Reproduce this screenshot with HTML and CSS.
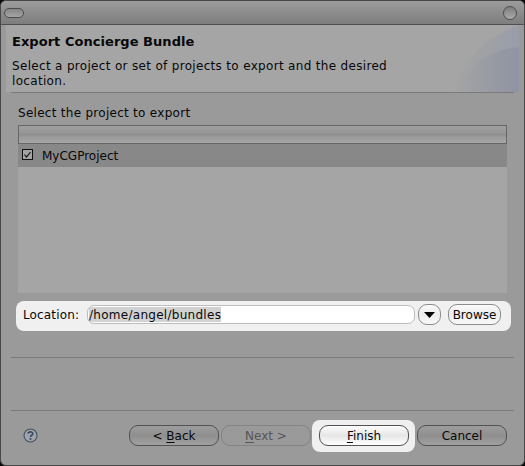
FILE: index.html
```html
<!DOCTYPE html>
<html lang="en">
<head>
<meta charset="utf-8">
<title>Export</title>
<link rel="stylesheet" href="styles.css">
</head>
<body>
<div class="window">
  <div class="titlebar"><span class="pill"></span><span class="orb"></span></div>
  <header class="banner">
    <svg class="swoosh" width="70" height="67" viewBox="0 0 70 67">
      <defs>
        <linearGradient id="a"><stop offset="0" stop-color="#a5a5a5"/><stop offset=".5" stop-color="#a0a1a4"/><stop offset="1" stop-color="#989dab"/></linearGradient>
        <linearGradient id="b"><stop offset="0" stop-color="#a4a4a5"/><stop offset=".5" stop-color="#999ca3"/><stop offset="1" stop-color="#9094a3"/></linearGradient>
      </defs>
      <path fill="url(#a)" d="M0 67C15 36 36 12 70 0V67Z"/>
      <path fill="url(#b)" d="M7 67C20 41 38 25 70 22V67Z"/>
    </svg>
    <h1>Export Concierge Bundle</h1>
    <p>Select a project or set of projects to export and the desired<br>location.</p>
  </header>
  <div class="rule"></div>
  <main>
    <div class="label">Select the project to export</div>
    <div class="table">
      <div class="thead"></div>
      <div class="row">
        <svg class="check" width="11" height="11" viewBox="0 0 11 11"><rect x=".5" y=".5" width="10" height="10" fill="#a4a4a4" stroke="#111"/><path d="M2.5 5.5L4.5 8L8.5 3" fill="none" stroke="#111" stroke-width="1.2"/></svg>
        <span class="name">MyCGProject</span>
      </div>
    </div>
    <div class="location">
      <span class="loc-label">Location:</span>
      <div class="input"><span>/home/angel/bundles</span></div>
      <div class="btn drop"><svg width="11" height="6" viewBox="0 0 11 6"><path d="M0 0H11L5.5 6Z"/></svg></div>
      <div class="btn browse">Browse</div>
    </div>
  </main>
  <div class="rule mid"></div>
  <div class="rule low"></div>
  <footer>
    <svg class="help" width="15" height="15" viewBox="0 0 15 15"><circle cx="7.5" cy="7.5" r="6.5" fill="#a1a4aa" stroke="#435064" stroke-width="1.1"/><path d="M5.2 5.7C5.2 3.4 9.8 3.3 9.8 5.7C9.8 7.3 7.5 7.1 7.5 9" fill="none" stroke="#3b4a68" stroke-width="1.7"/><rect x="6.6" y="10" width="1.8" height="1.8" fill="#3b4a68"/></svg>
    <div class="btn dim back"><span>&lt; <u>B</u>ack</span></div>
    <div class="btn dim off"><span><u>N</u>ext &gt;</span></div>
    <div class="spot"><div class="btn finish"><span><u>F</u>inish</span></div></div>
    <div class="btn dim cancel">Cancel</div>
  </footer>
</div>
</body>
</html>
```
FILE: styles.css
```css
* { box-sizing: border-box; }
body {
  margin: 0;
  background: #080808;
  font: 12px/15px "DejaVu Sans", sans-serif;
  color: #080808;
}
.window {
  display: flex;
  flex-direction: column;
  width: 525px;
  height: 466px;
  border: 1px solid #484848;
  border-radius: 6px;
  background: #9a9a9a;
  overflow: hidden;
}
.titlebar {
  display: flex;
  justify-content: space-between;
  align-items: center;
  height: 24px;
  padding: 0 7px 0 3px;
  border-bottom: 1px solid #505050;
  background: linear-gradient(#9c9c9c, #7d7d7d);
}
.pill {
  width: 20px;
  height: 10px;
  border: 1px solid #4c4c4c;
  border-radius: 5px;
  background: linear-gradient(#858585, #a5a5a5);
}
.orb {
  width: 14px;
  height: 14px;
  border: 1px solid #4c4c4c;
  border-radius: 50%;
  background: linear-gradient(#7d7d7d, #aaa);
}
.banner {
  position: relative;
  height: 67px;
  margin: 0 5px;
  padding: 9px 6px 0;
  background: #a5a5a5;
}
.swoosh { position: absolute; right: 0; top: 0; }
h1 { margin: 0 0 10px; font-size: 13px; line-height: 15px; letter-spacing: .04px; }
p { margin: 0; letter-spacing: .32px; }
.rule { flex: none; height: 1px; margin: 0 10px; background: #7a7a7a; }
main { padding: 13px 13px 0 15px; }
.label { margin-left: 2px; letter-spacing: .28px; }
.table { height: 168px; margin: 4px 4px 0 2px; background: #a5a5a5; }
.thead {
  height: 19px;
  border: 1px solid #666;
  background: linear-gradient(#9f9f9f, #979797 40%, #8f8f8f 50%, #9a9a9a 65%, #a6a6a6);
}
.row {
  display: flex;
  align-items: center;
  gap: 9px;
  height: 23px;
  padding-left: 4px;
  background: #888;
}
.check { margin-bottom: 2px; }
.name { padding-top: 2px; }
.location {
  display: flex;
  align-items: center;
  height: 30px;
  margin-top: 8px;
  padding: 0 10px 3px 7px;
  border-radius: 8px;
  background: #f0f0f0;
}
.loc-label { width: 64px; letter-spacing: .15px; padding-top: 1px; }
.input {
  width: 328px;
  height: 19px;
  padding: 1px 1px;
  border: 1px solid #bdbdbd;
  border-radius: 7px;
  background: #fff;
}
.input span {
  display: block;
  width: max-content;
  height: 15px;
  padding-top: 1px;
  line-height: 14px;
  background: #d2d2d2;
  letter-spacing: .28px;
}
.btn {
  display: flex;
  align-items: center;
  justify-content: center;
  height: 21px;
  border: 1px solid #8d8d8d;
  border-radius: 9px;
  background: linear-gradient(#fafafa, #ececec 50%, #f8f8f8);
}
.drop { width: 23px; margin: 0 7px 0 3px; }
.browse { width: 53px; padding-top: 1px; }
.mid { margin-top: 26px; }
.low { margin-top: 52px; }
footer {
  display: flex;
  align-items: center;
  height: 32px;
  margin-top: 9px;
  padding-left: 22px;
}
.help { margin: 0 91px 2px 0; }
footer .btn { width: 90px; height: 21px; padding-top: 2px; border-color: #525252; }
.dim { background: linear-gradient(#9d9d9d, #8f8f8f 50%, #a1a1a1); margin-bottom: 1px; }
footer .off { margin-left: 2px; background: none; color: #555; border-color: #838383; }
.spot {
  width: 103px;
  height: 32px;
  margin: 0 2px 0 1px;
  padding: 5px 7px;
  border-radius: 8px;
  background: #f0f0f0;
}
.finish { background: linear-gradient(#fdfdfd, #e6e6e6 50%, #fff); }
u { text-underline-offset: 2px; text-decoration-skip-ink: none; }
```
